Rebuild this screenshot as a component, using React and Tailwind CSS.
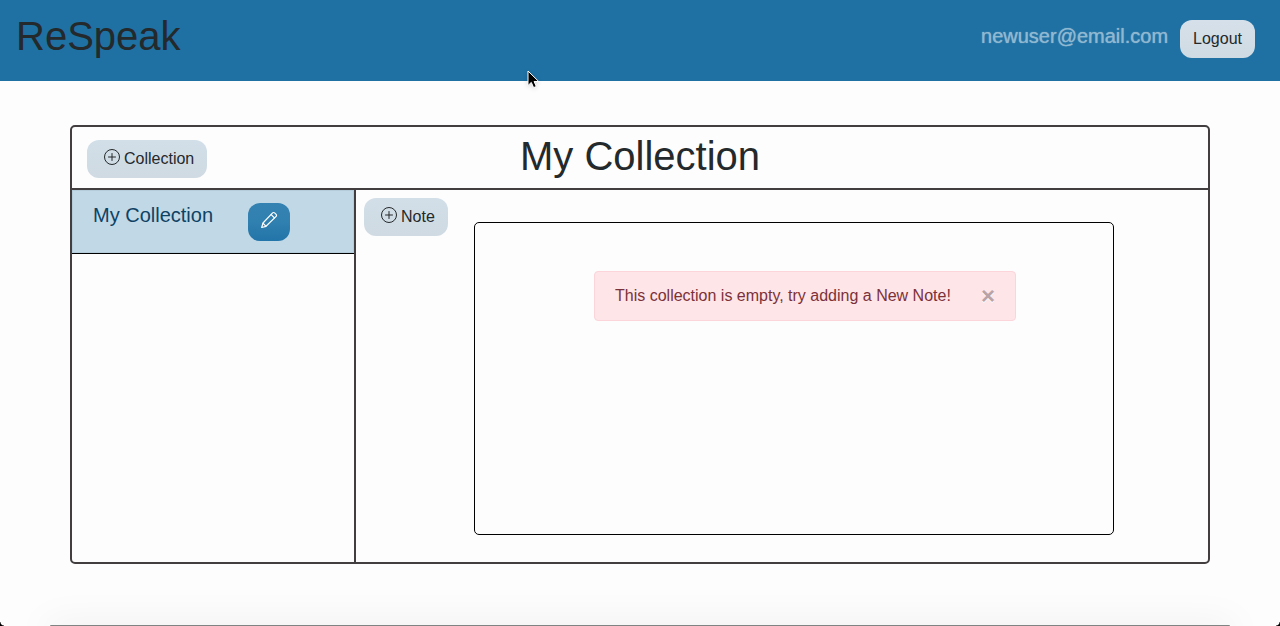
import React from "react";

function PlusCircleIcon() {
  return (
    <svg width="16" height="16" viewBox="0 0 16 16" fill="none" stroke="currentColor" aria-hidden="true">
      <circle cx="8" cy="8" r="7.5" />
      <path d="M8 4.5v7M4.5 8h7" strokeLinecap="round" />
    </svg>
  );
}

function PencilIcon() {
  return (
    <svg width="18" height="18" viewBox="0 0 18 18" fill="none" stroke="currentColor" strokeWidth="1.2" strokeLinejoin="round" strokeLinecap="round" aria-hidden="true">
      <path d="M12.6 1.9a1.4 1.4 0 0 1 2 0l1.5 1.5a1.4 1.4 0 0 1 0 2L6 15.3l-4.3 1.2L3 12z" />
      <path d="M11.2 3.6l3.2 3.2M3.2 12.3l2.6 2.8" />
    </svg>
  );
}

function AddButton({ children }) {
  return (
    <button type="button" className="flex h-[38px] items-center gap-1 rounded-xl bg-linear-to-b from-[#d2dfe8] to-[#cfdae2] pr-[13px] pl-[17px] whitespace-nowrap text-[#24292b]">
      <span className="pb-1"><PlusCircleIcon /></span>
      {children}
    </button>
  );
}

function Header() {
  return (
    <header className="flex h-[81px] items-start justify-between bg-[#1f71a3] pr-[25px] pl-4">
      <h1 className="pt-3 text-[40px] leading-[48px]">ReSpeak</h1>
      <div className="flex gap-3 pt-5">
        <span className="text-[20px] leading-8 text-[#8fb8d1] [text-shadow:0_0_1px_#8fb8d1]">newuser@email.com</span>
        <button type="button" className="h-[38px] rounded-xl bg-linear-to-b from-[#d6e0ea] to-[#cfdbe2] px-[13px]">Logout</button>
      </div>
    </header>
  );
}

function Sidebar() {
  return (
    <aside className="w-1/4 border-r-2 border-[#423e40]">
      <div className="flex h-16 items-start border-b border-black bg-[#c1d8e6] pl-[21px] shadow-[inset_0_0_0_1px_#b5ccda]">
        <a href="#my-collection" className="w-[155px] pt-[9px] text-[20px] leading-8 text-[#0e4365]">My Collection</a>
        <button type="button" aria-label="Edit collection" className="mt-[13px] flex h-[38px] w-[42px] items-center justify-center rounded-xl bg-linear-to-b from-[#3482b2] via-[#3080b0] to-[#2275a9] pb-1 text-white">
          <PencilIcon />
        </button>
      </div>
    </aside>
  );
}

function EmptyAlert() {
  return (
    <div role="alert" className="flex h-[50px] w-[422px] items-center justify-between rounded border border-[#fbd5da] bg-[#fde5e8] pr-4 pl-5 text-[#7c3139]">
      <p>This collection is empty, try adding a New Note!</p>
      <button type="button" aria-label="Close" className="px-1 text-[24px] leading-6 font-bold text-[#b9a3a6] [text-shadow:0_1px_0_#fff]">×</button>
    </div>
  );
}

function Pointer() {
  return (
    <svg className="absolute top-[70px] left-[527px] drop-shadow-sm" width="13" height="20" viewBox="0 0 13 20" aria-hidden="true">
      <path d="M1 1v14.5l3.3-3.1 2.3 5.2 2.7-1.1-2.2-5h4.6z" fill="#000" stroke="#fff" strokeWidth="1" />
    </svg>
  );
}

export default function App() {
  return (
    <div className="relative flex min-h-screen flex-col overflow-hidden bg-[#fdfdfd] font-['Liberation_Sans',Arial,sans-serif] text-[16px] leading-6 text-[#24292b]">
      <Header />
      <main className="mx-auto mt-11 w-full max-w-[1140px] rounded-[5px] border-2 border-[#423e40]">
        <div className="grid h-[63px] grid-cols-[1fr_auto_1fr] items-start border-b-2 border-[#423e40]">
          <div className="flex pt-[13px] pl-[15px]">
            <AddButton>Collection</AddButton>
          </div>
          <h2 className="pt-[5px] text-[40px] leading-[48px]">My Collection</h2>
        </div>
        <div className="flex min-h-[372px]">
          <Sidebar />
          <section className="flex flex-1 pr-[94px] pb-[27px]">
            <div className="w-[118px] pt-2 pl-2">
              <div className="flex">
                <AddButton>Note</AddButton>
              </div>
            </div>
            <div className="mt-8 flex flex-1 items-start rounded-[5px] border border-black pt-12 pl-[119px]">
              <EmptyAlert />
            </div>
          </section>
        </div>
      </main>
      <div className="absolute inset-x-[50px] bottom-0 h-px rounded-t bg-[#808483] shadow-[0_6px_36px_4px_#00000022]" />
      <div className="absolute bottom-0 left-0 h-1 w-1 bg-[radial-gradient(circle_at_top_right,transparent_3px,#000_4px)]" />
      <div className="absolute right-0 bottom-0 h-1 w-1 bg-[radial-gradient(circle_at_top_left,transparent_3px,#000_4px)]" />
      <Pointer />
    </div>
  );
}
